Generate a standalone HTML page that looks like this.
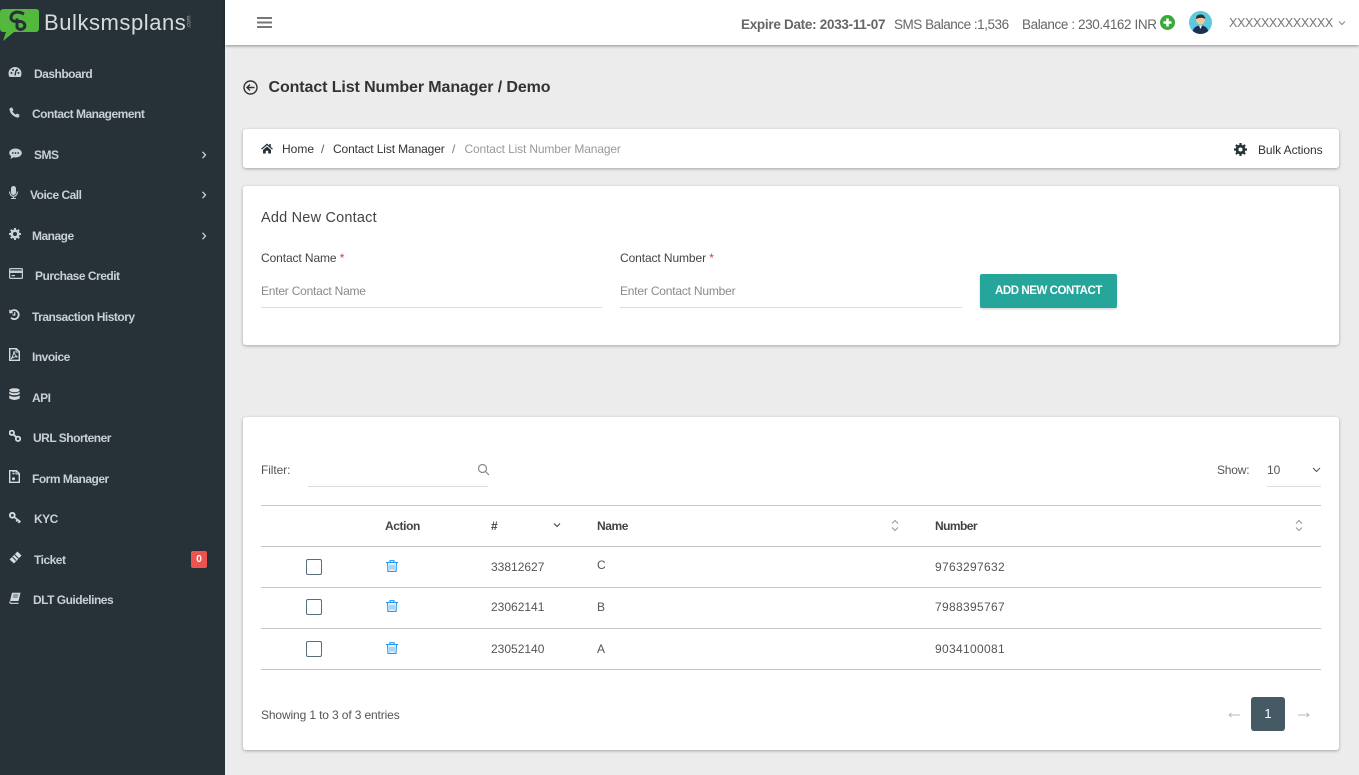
<!DOCTYPE html>
<html><head><meta charset="utf-8"><title>Contact List Number Manager</title>
<style>
*{box-sizing:border-box}
html,body{margin:0;padding:0;width:1359px;height:775px;overflow:hidden;background:#ececec;font-family:"Liberation Sans",Arial,sans-serif;color:#333}
.t{position:absolute;white-space:nowrap;line-height:16px;font-size:12px}
.side{position:absolute;left:0;top:0;width:225px;height:775px;background:#263238}
.m{color:#c9d0d5;font-weight:700;font-size:12px;letter-spacing:-.5px}
svg{position:absolute;display:block}
.top{position:absolute;left:225px;top:0;width:1134px;height:45px;background:#fff;box-shadow:0 1px 3px rgba(0,0,0,.4)}
.card{position:absolute;left:243px;width:1096px;background:#fff;border-radius:3px;box-shadow:0 1px 3px rgba(0,0,0,.3)}
.line{position:absolute;left:261px;width:1060px;height:1px;background:#c8c8c8}
.cb{position:absolute;left:306px;width:16px;height:16px;border:1px solid #546e7a;border-radius:2px;background:#fff}
.ul{position:absolute;height:1px;background:#ddd}
</style></head><body>
<div class="side"></div>

<!-- logo -->
<svg style="left:0;top:8px" width="40" height="34" viewBox="0 0 40 34"><path d="M4 1H36Q39 1 39 4V20Q39 24 36 24H14L3 33L6 24H3Q0 24 0 20V4Q0 1 4 1Z" fill="#55b83e"/><path d="M24 6Q16 2 12 6.500Q9 12 15 13.500H21Q26 15 24.500 19.500Q20.500 23.500 17 19.500V10.500" fill="none" stroke="#263238" stroke-width="3"/></svg>
<div class="t" style="left:44px;top:9px;font-size:22px;line-height:28px;color:#d8dcdc;letter-spacing:.55px">Bulksmsplans</div>
<div class="t" style="left:183px;top:18px;font-size:6px;line-height:8px;color:#aaa;transform:rotate(-90deg);transform-origin:center">.com</div>

<!-- sidebar icons -->
<svg style="left:8px;top:66px" width="14" height="12" viewBox="0 0 14 12"><path d="M7 1a6.500 6.500 0 0 0-6.500 6.500Q.5 9.500 1.500 11H12.500Q13.500 9.500 13.500 7.500A6.500 6.500 0 0 0 7 1Z" fill="#c9d0d5"/><circle cx="3.500" cy="7" r="1" fill="#263238"/><circle cx="5" cy="4" r="1" fill="#263238"/><circle cx="9" cy="4" r="1" fill="#263238"/><circle cx="10.500" cy="7" r="1" fill="#263238"/><path d="M7 9.500 8 4.500" stroke="#263238" stroke-width="1.400"/></svg>
<svg style="left:9px;top:107px" width="11" height="11" viewBox="0 0 11 11"><path d="M1 1 3.200 .5 4.500 3.200 3.300 4.300Q4.500 6.500 6.800 7.600L8 6.500 10.500 7.800 10 10Q9.500 10.800 8 10.500 1.500 8.500 .5 2.500Q.5 1.300 1 1Z" fill="#c9d0d5"/></svg>
<svg style="left:9px;top:148px" width="13" height="12" viewBox="0 0 13 12"><path d="M6.500 .5C3 .5 .2 2.500 .2 5c0 1.300.8 2.400 2 3.200L1.500 11 4.600 9.300Q5.500 9.500 6.500 9.500c3.500 0 6.300-2 6.300-4.500S10 .5 6.500 .5Z" fill="#c9d0d5"/><circle cx="3.800" cy="5" r=".9" fill="#263238"/><circle cx="6.500" cy="5" r=".9" fill="#263238"/><circle cx="9.200" cy="5" r=".9" fill="#263238"/></svg>
<svg style="left:9px;top:186px" width="9" height="13" viewBox="0 0 9 13"><rect x="2" y="0" width="5" height="9" rx="2.500" fill="#c9d0d5"/><path d="M.7 5.500V6.500A3.800 3.800 0 0 0 8.300 6.500V5.500M4.500 10.500V12M2 12.500H7" fill="none" stroke="#c9d0d5" stroke-width="1.100"/></svg>
<svg style="left:9px;top:228px" width="12" height="12" viewBox="0 0 12 12"><circle cx="6" cy="6" r="3.300" fill="none" stroke="#c9d0d5" stroke-width="2.600"/><path d="M6 0V2M6 10V12M0 6H2M10 6H12M1.800 1.800 3.200 3.200M8.800 8.800 10.200 10.200M1.800 10.200 3.200 8.800M8.800 3.200 10.200 1.800" stroke="#c9d0d5" stroke-width="2"/></svg>
<svg style="left:9px;top:268px" width="14" height="11" viewBox="0 0 14 11"><rect x=".6" y=".6" width="12.800" height="9.800" rx="1" fill="none" stroke="#c9d0d5" stroke-width="1.200"/><rect x="1" y="2.500" width="12" height="2.500" fill="#c9d0d5"/><rect x="2.500" y="7" width="3.500" height="1.200" fill="#c9d0d5"/></svg>
<svg style="left:9px;top:309px" width="11" height="11" viewBox="0 0 11 11"><path d="M2 2.500A4.500 4.500 0 1 1 2 8.800" fill="none" stroke="#d5dadd" stroke-width="1.800"/><path d="M.3 .3V4.300H4.300Z" fill="#d5dadd"/><path d="M5.700 3.300V6H3.500" fill="none" stroke="#d5dadd" stroke-width="1.300"/></svg>
<svg style="left:9px;top:348px" width="11" height="13" viewBox="0 0 11 13"><path d="M.7.7H7.300L10.300 3.700V12.300H.7Z" fill="none" stroke="#d5dadd" stroke-width="1.400"/><path d="M7 1V4H10" fill="none" stroke="#d5dadd" stroke-width="1"/><path d="M5 3Q5.300 7 8.500 9 5 8 2 11 4.500 7.500 5 3Z" fill="none" stroke="#d5dadd" stroke-width="1"/></svg>
<svg style="left:9px;top:388px" width="11" height="13" viewBox="0 0 11 13"><ellipse cx="5.500" cy="2.200" rx="5.200" ry="2" fill="#d5dadd"/><path d="M.3 3.900Q5.500 6.600 10.700 3.900V6Q5.500 8.600.3 6ZM.3 7.500Q5.500 10.200 10.700 7.500V10.500Q5.500 13.400.3 10.500Z" fill="#d5dadd"/></svg>
<svg style="left:9px;top:430px" width="12" height="12" viewBox="0 0 12 12"><circle cx="2.800" cy="2.800" r="2.200" fill="none" stroke="#d5dadd" stroke-width="1.800"/><circle cx="9" cy="8.800" r="2.200" fill="none" stroke="#d5dadd" stroke-width="1.800"/><path d="M4.300 4.500 7.300 7" stroke="#d5dadd" stroke-width="1.800"/></svg>
<svg style="left:9px;top:470px" width="11" height="13" viewBox="0 0 11 13"><path d="M.7.7H7.300L10.300 3.700V12.300H.7Z" fill="none" stroke="#d5dadd" stroke-width="1.400"/><path d="M7 1V4H10" fill="none" stroke="#d5dadd" stroke-width="1"/><path d="M4.500 1V5" stroke="#d5dadd" stroke-width="2" stroke-dasharray="1.200 .8"/><circle cx="4.500" cy="8.800" r="1.500" fill="#d5dadd"/></svg>
<svg style="left:9px;top:512px" width="12" height="12" viewBox="0 0 12 12"><circle cx="3.300" cy="3.300" r="2.400" fill="none" stroke="#d5dadd" stroke-width="1.900"/><path d="M5 5 11.500 10M8.500 7.700 7.300 9.500M10.500 9.300 9.500 11" stroke="#d5dadd" stroke-width="1.700"/></svg>
<svg style="left:9px;top:551px" width="13" height="13" viewBox="0 0 13 13"><path d="M8.500 .5 12.500 4.500 5 12.500 .5 8.500Z" fill="#d5dadd"/><path d="M5.500 3.500 9.500 7.500M3.500 6 7 9.500" stroke="#263238" stroke-width=".9"/></svg>
<svg style="left:9px;top:592px" width="12" height="12" viewBox="0 0 12 12"><path d="M3 .8H11.500L9.500 9H1Z" fill="#d5dadd"/><path d="M1 9.500Q.5 11 2 11.300H9.500" fill="none" stroke="#d5dadd" stroke-width="1.200"/><path d="M4.300 3H9.300M3.900 5H8.800" stroke="#263238" stroke-width=".8"/></svg>

<div class="t m" style="left:34px;top:66px">Dashboard</div>
<div class="t m" style="left:32px;top:106px">Contact Management</div>
<div class="t m" style="left:34px;top:147px">SMS</div>
<div class="t m" style="left:30px;top:187px">Voice Call</div>
<div class="t m" style="left:32px;top:228px">Manage</div>
<div class="t m" style="left:35px;top:268px">Purchase Credit</div>
<div class="t m" style="left:32px;top:309px">Transaction History</div>
<div class="t m" style="left:32px;top:349px">Invoice</div>
<div class="t m" style="left:32px;top:390px">API</div>
<div class="t m" style="left:33px;top:430px">URL Shortener</div>
<div class="t m" style="left:32px;top:471px">Form Manager</div>
<div class="t m" style="left:34px;top:511px">KYC</div>
<div class="t m" style="left:34px;top:552px">Ticket</div>
<div class="t m" style="left:33px;top:592px">DLT Guidelines</div>

<svg style="left:201px;top:151px" width="6" height="8" viewBox="0 0 6 8"><path d="M1.500 .8 4.500 4 1.500 7.200" fill="none" stroke="#c9d0d5" stroke-width="1.300"/></svg>
<svg style="left:201px;top:191px" width="6" height="8" viewBox="0 0 6 8"><path d="M1.500 .8 4.500 4 1.500 7.200" fill="none" stroke="#c9d0d5" stroke-width="1.300"/></svg>
<svg style="left:201px;top:232px" width="6" height="8" viewBox="0 0 6 8"><path d="M1.500 .8 4.500 4 1.500 7.200" fill="none" stroke="#c9d0d5" stroke-width="1.300"/></svg>
<div class="t" style="left:191px;top:551px;width:16px;height:17px;background:#ef5350;border-radius:2px;color:#fff;font-size:10px;font-weight:700;line-height:17px;text-align:center">0</div>

<!-- topbar -->
<div class="top"></div>
<svg style="left:257px;top:16px" width="15" height="13" viewBox="0 0 15 13"><path d="M0 2H15M0 6.500H15M0 11H15" stroke="#777" stroke-width="2"/></svg>
<div class="t" style="left:741px;top:17px;font-size:13.500px;font-weight:700;color:#666;letter-spacing:-.29px">Expire Date: 2033-11-07</div>
<div class="t" style="left:894px;top:17px;font-size:13.500px;color:#666;letter-spacing:-.47px">SMS Balance :1,536</div>
<div class="t" style="left:1022px;top:17px;font-size:13.500px;color:#666;letter-spacing:-.4px">Balance : 230.4162 INR</div>
<svg style="left:1160px;top:15px" width="15" height="15" viewBox="0 0 15 15"><circle cx="7.500" cy="7.500" r="7.500" fill="#3aa83a"/><path d="M7.500 3.500V11.500M3.500 7.500H11.500" stroke="#fff" stroke-width="2.600"/></svg>
<svg style="left:1189px;top:11px" width="23" height="23" viewBox="0 0 23 23"><defs><clipPath id="av"><circle cx="11.500" cy="11.500" r="11.500"/></clipPath></defs><g clip-path="url(#av)"><rect width="23" height="23" fill="#5cc9dc"/><circle cx="11.500" cy="9" r="4.500" fill="#f0c8a0"/><path d="M6.800 8Q7 3.500 11.500 3.500T16.200 8Q13 5.500 6.800 8Z" fill="#26323c"/><path d="M3 23Q4 14.500 11.500 14.500T20 23Z" fill="#1d2f55"/><path d="M10 14.500H13L11.500 18Z" fill="#fff"/></g></svg>
<div class="t" style="left:1229px;top:15px;font-size:12.500px;color:#777;letter-spacing:-.35px">XXXXXXXXXXXXX</div>
<svg style="left:1338px;top:20px" width="8" height="6" viewBox="0 0 8 6"><path d="M1 1.500 4 4.500 7 1.500" fill="none" stroke="#888" stroke-width="1"/></svg>

<!-- heading -->
<svg style="left:243px;top:80px" width="15" height="15" viewBox="0 0 15 15"><circle cx="7.500" cy="7.500" r="6.500" fill="none" stroke="#333" stroke-width="1.400"/><path d="M11.500 7.500H4.200M7 4.500 4 7.500 7 10.500" fill="none" stroke="#333" stroke-width="1.400"/></svg>
<div class="t" style="left:268.500px;top:78px;font-size:16px;line-height:20px;font-weight:700;color:#333;letter-spacing:-.1px">Contact List Number Manager / Demo</div>

<!-- breadcrumb card -->
<div class="card" style="top:129px;height:39px"></div>
<svg style="left:261px;top:143px" width="12" height="11" viewBox="0 0 12 11"><path d="M6 .5 0 5.800 1 6.500 6 2.300 11 6.500 12 5.800 9.800 3.900V1H8.300V2.600ZM2 7 6 3.500 10 7V10.500H7.200V7.800H4.800V10.500H2Z" fill="#263238"/></svg>
<div class="t" style="left:282px;top:141px;color:#333">Home</div>
<div class="t" style="left:321px;top:141px;color:#555">/</div>
<div class="t" style="left:333px;top:141px;color:#333;letter-spacing:-.12px">Contact List Manager</div>
<div class="t" style="left:452px;top:141px;color:#777">/</div>
<div class="t" style="left:464.500px;top:141px;color:#999;letter-spacing:-.14px">Contact List Number Manager</div>
<svg style="left:1234px;top:143px" width="13" height="13" viewBox="0 0 12 12"><circle cx="6" cy="6" r="3.200" fill="none" stroke="#263238" stroke-width="2.600"/><path d="M6 0V2M6 10V12M0 6H2M10 6H12M1.800 1.800 3.200 3.200M8.800 8.800 10.200 10.200M1.800 10.200 3.200 8.800M8.800 3.200 10.200 1.800" stroke="#263238" stroke-width="2"/></svg>
<div class="t" style="left:1258px;top:142px;color:#333;letter-spacing:-.07px">Bulk Actions</div>

<!-- add card -->
<div class="card" style="top:186px;height:159px"></div>
<div class="t" style="left:261px;top:210px;font-size:14.500px;color:#444;letter-spacing:.2px">Add New Contact</div>
<div class="t" style="left:261px;top:250px;color:#444;letter-spacing:-.1px">Contact Name <span style="color:#e53935">*</span></div>
<div class="t" style="left:620px;top:250px;color:#444;letter-spacing:-.1px">Contact Number <span style="color:#e53935">*</span></div>
<div class="t" style="left:261px;top:283px;color:#8a8a8a;letter-spacing:-.22px">Enter Contact Name</div>
<div class="t" style="left:620px;top:283px;color:#8a8a8a;letter-spacing:-.2px">Enter Contact Number</div>
<div class="ul" style="left:261px;top:307px;width:341px"></div>
<div class="ul" style="left:620px;top:307px;width:342px"></div>
<div class="t" style="left:980px;top:274px;width:137px;height:34px;background:#26a69a;color:#fff;font-weight:700;font-size:11.500px;line-height:35px;text-align:center;border-radius:2px;letter-spacing:-.44px;box-shadow:0 1px 2px rgba(0,0,0,.2)">ADD NEW CONTACT</div>

<!-- table card -->
<div class="card" style="top:417px;height:333px"></div>
<div class="t" style="left:261px;top:462px;color:#555;letter-spacing:-.1px">Filter:</div>
<svg style="left:477px;top:463px" width="13" height="13" viewBox="0 0 13 13"><circle cx="5.500" cy="5.500" r="4" fill="none" stroke="#888" stroke-width="1.200"/><path d="M8.500 8.500 12 12" stroke="#888" stroke-width="1.200"/></svg>
<div class="ul" style="left:308px;top:486px;width:180px"></div>
<div class="t" style="left:1217px;top:462px;color:#555;letter-spacing:-.2px">Show:</div>
<div class="t" style="left:1267px;top:462px;color:#555">10</div>
<svg style="left:1312px;top:467px" width="9" height="6" viewBox="0 0 9 6"><path d="M1 1 4.500 4.500 8 1" fill="none" stroke="#555" stroke-width="1"/></svg>
<div class="ul" style="left:1267px;top:486px;width:54px"></div>

<div class="line" style="top:505px"></div>
<div class="line" style="top:546px"></div>
<div class="line" style="top:587px"></div>
<div class="line" style="top:628px"></div>
<div class="line" style="top:669px"></div>

<div class="t" style="left:385px;top:518px;font-weight:700;color:#444;letter-spacing:-.4px">Action</div>
<div class="t" style="left:491px;top:518px;font-weight:700;color:#444">#</div>
<svg style="left:553px;top:522px" width="8" height="6" viewBox="0 0 8 6"><path d="M1 1.500 4 4.500 7 1.500" fill="none" stroke="#444" stroke-width="1.100"/></svg>
<div class="t" style="left:597px;top:518px;font-weight:700;color:#444;letter-spacing:-.4px">Name</div>
<svg style="left:891px;top:519px" width="8" height="13" viewBox="0 0 8 13"><path d="M1 4.500 4 1.500 7 4.500M1 8.500 4 11.500 7 8.500" fill="none" stroke="#999" stroke-width="1.100"/></svg>
<div class="t" style="left:935px;top:518px;font-weight:700;color:#444;letter-spacing:-.55px">Number</div>
<svg style="left:1295px;top:519px" width="8" height="13" viewBox="0 0 8 13"><path d="M1 4.500 4 1.500 7 4.500M1 8.500 4 11.500 7 8.500" fill="none" stroke="#999" stroke-width="1.100"/></svg>

<div class="cb" style="top:559px"></div>
<div class="cb" style="top:599px"></div>
<div class="cb" style="top:641px"></div>

<svg style="left:386px;top:560px" width="12" height="12" viewBox="0 0 12 12"><path d="M0 2.500H12M4 2.500V.7H8V2.500M1.500 2.500 2 11.400H10L10.500 2.500" fill="none" stroke="#2196f3" stroke-width="1.100"/><path d="M4 4.500V9.800M6 4.500V9.800M8 4.500V9.800" stroke="#64b5f6" stroke-width="1.100"/></svg>
<svg style="left:386px;top:600px" width="12" height="12" viewBox="0 0 12 12"><path d="M0 2.500H12M4 2.500V.7H8V2.500M1.500 2.500 2 11.400H10L10.500 2.500" fill="none" stroke="#2196f3" stroke-width="1.100"/><path d="M4 4.500V9.800M6 4.500V9.800M8 4.500V9.800" stroke="#64b5f6" stroke-width="1.100"/></svg>
<svg style="left:386px;top:642px" width="12" height="12" viewBox="0 0 12 12"><path d="M0 2.500H12M4 2.500V.7H8V2.500M1.500 2.500 2 11.400H10L10.500 2.500" fill="none" stroke="#2196f3" stroke-width="1.100"/><path d="M4 4.500V9.800M6 4.500V9.800M8 4.500V9.800" stroke="#64b5f6" stroke-width="1.100"/></svg>

<div class="t" style="left:491px;top:559px;color:#555">33812627</div>
<div class="t" style="left:597px;top:557px;color:#555">C</div>
<div class="t" style="left:935px;top:559px;color:#555;letter-spacing:.33px">9763297632</div>
<div class="t" style="left:491px;top:599px;color:#555">23062141</div>
<div class="t" style="left:597px;top:599px;color:#555">B</div>
<div class="t" style="left:935px;top:599px;color:#555;letter-spacing:.33px">7988395767</div>
<div class="t" style="left:491px;top:641px;color:#555">23052140</div>
<div class="t" style="left:597px;top:641px;color:#555">A</div>
<div class="t" style="left:935px;top:641px;color:#555;letter-spacing:.33px">9034100081</div>

<div class="t" style="left:261px;top:707px;color:#555;letter-spacing:-.13px">Showing 1 to 3 of 3 entries</div>
<svg style="left:1228px;top:711px" width="12" height="8" viewBox="0 0 12 8"><path d="M12 4H1M3.500 2 1 4 3.500 6" fill="none" stroke="#bbb" stroke-width="1"/></svg>
<div class="t" style="left:1251px;top:697px;width:34px;height:34px;background:#455a64;color:#fff;border-radius:3px;line-height:34px;text-align:center;font-size:13px">1</div>
<svg style="left:1298px;top:711px" width="12" height="8" viewBox="0 0 12 8"><path d="M0 4H11M8.500 2 11 4 8.500 6" fill="none" stroke="#bbb" stroke-width="1"/></svg>
</body></html>
